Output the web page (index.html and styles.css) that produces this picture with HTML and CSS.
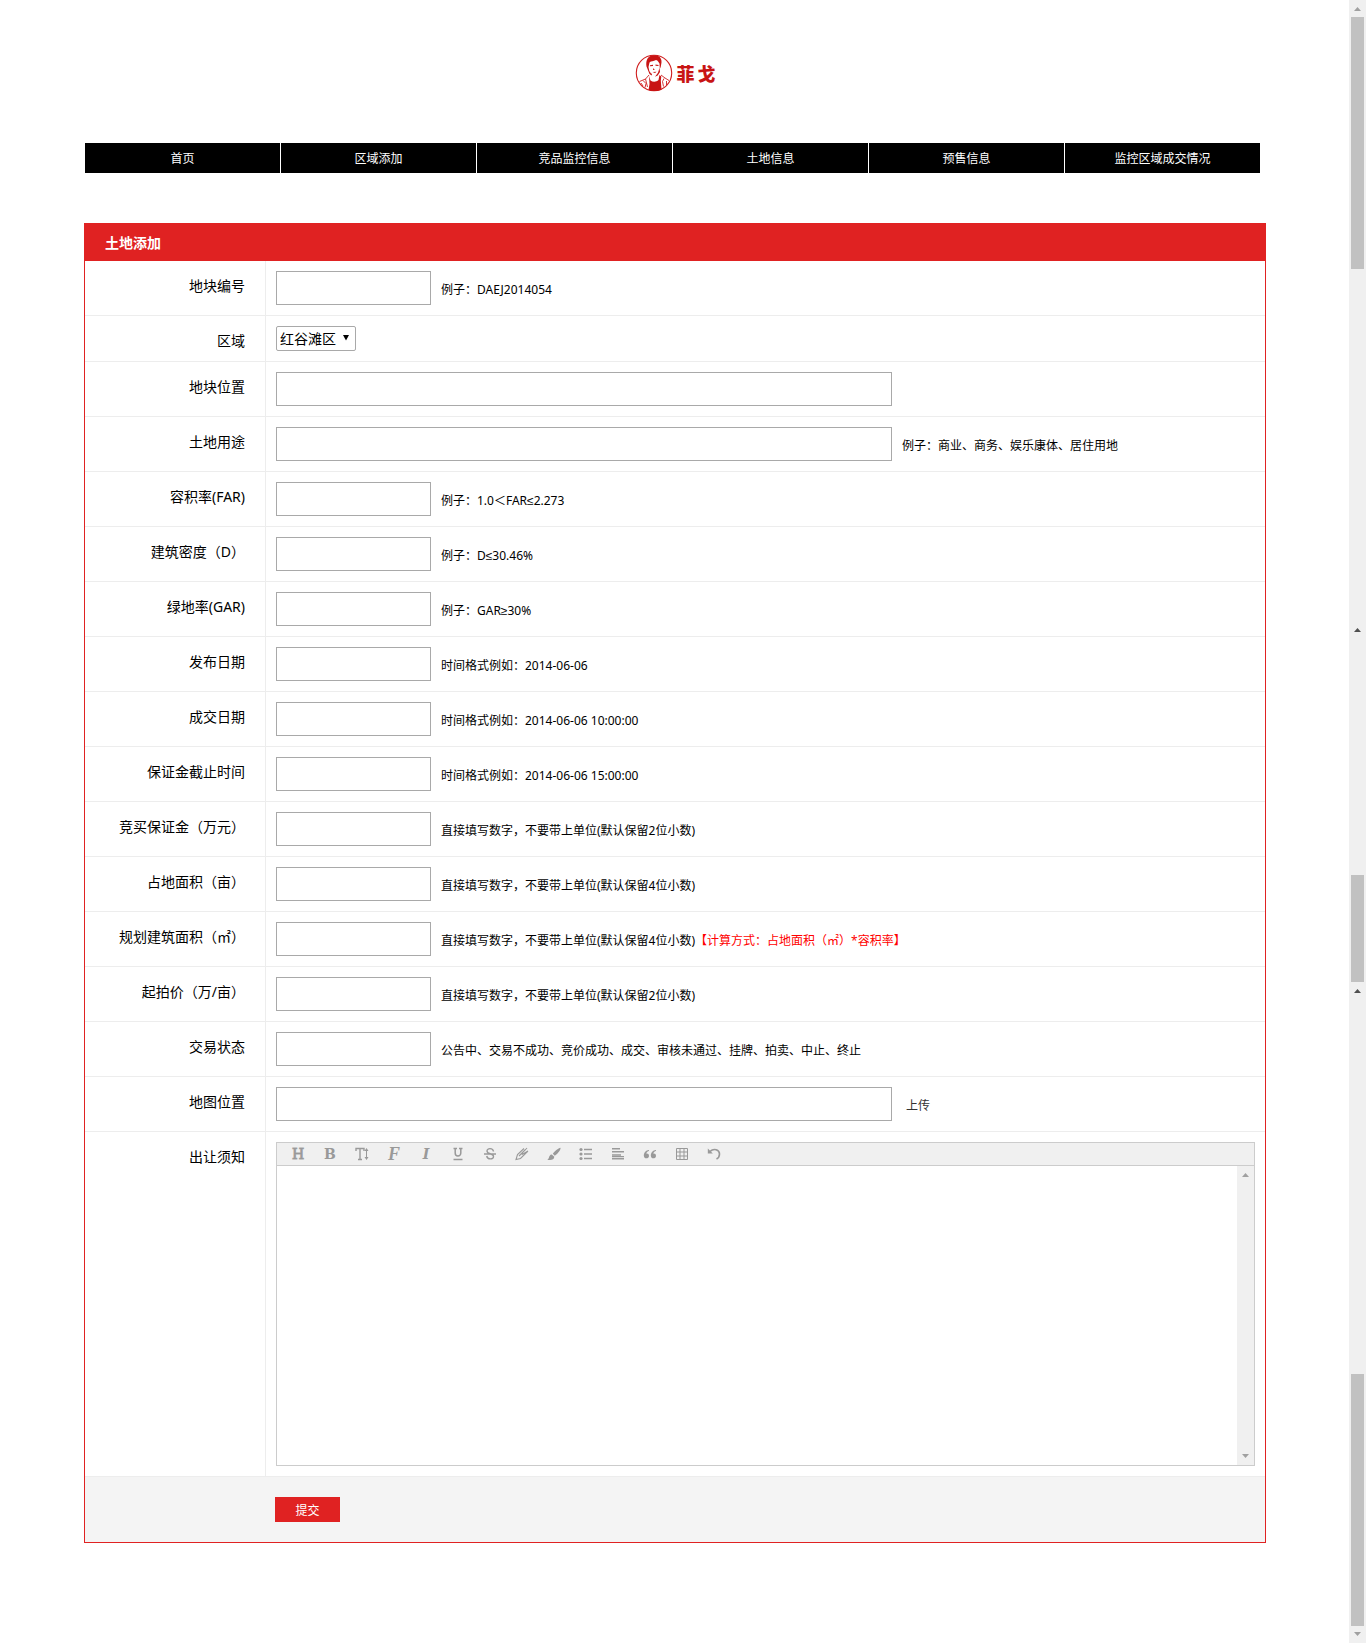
FILE: index.html
```html
<!DOCTYPE html>
<html lang="zh-CN">
<head>
<meta charset="utf-8">
<title>土地添加</title>
<link rel="stylesheet" href="styles.css">
</head>
<body>
<div class="page">
  <header class="brand">
    <svg class="brand-mark" viewBox="0 0 38 38" aria-hidden="true">
      <circle cx="19" cy="19" r="17.7" fill="#fff" stroke="#d02020" stroke-width="1.1"/>
      <path fill="#c81414" d="M11.500 12.500C10.500 6 13 1.500 18.500 1.200c5-.2 8.500 2.300 8 7.300l-.8 4.500-.9 2-.3-5.500c-1-1.500-1.500-3-3.500-3.500-2.500 1.500-5 .8-6.500 2.500l-1 4.500.8 4 1.700 2.500 1 .2-.3 1.800-2.200-1.500z"/>
      <path fill="#c81414" d="M15 11.300l3-.5v1.200l-3 .3zm5.500-.7l3 .3v1l-3-.1zM18.500 14l1.200 2h-1.700zm-1 4l4-.3-1.500 1.300zM24.500 14l.5 4-2.300 3.500-2.700 1.200 3-4z"/>
      <path fill="#c81414" d="M14 22l1.500 4.500c2.500 1.800 6 1.500 8-.5l1-5 1.800 1.500-.5 4 .7 9.200c-4 1.800-9.500 1.800-13 .2l1-6z"/>
      <path fill="none" stroke="#d02020" stroke-width=".9" d="M14 21l-3.500 4-6 2.500M26 21l4 3 4 2.500M8 26.500l3 3-1 4M10.500 25l2 8M29 24.500l-1.500 3 1 5M6 29l2 3M31.500 27v4"/>
    </svg>
    <span class="brand-name"><span>菲</span><span>戈</span></span>
  </header>

  <nav class="menu">
    <a href="#">首页</a>
    <a href="#">区域添加</a>
    <a href="#">竞品监控信息</a>
    <a href="#">土地信息</a>
    <a href="#">预售信息</a>
    <a href="#">监控区域成交情况</a>
  </nav>

  <form class="panel">
    <h1 class="panel-title">土地添加</h1>
    <div class="row"><label class="name" for="code">地块编号</label><div class="field"><input class="box" id="code" type="text"><span class="hint">例子：DAEJ2014054</span></div></div>
    <div class="row"><label class="name" for="area">区域</label><div class="field"><span class="pick"><select id="area"><option>红谷滩区</option></select><svg class="pick-arrow" viewBox="0 0 7 7" aria-hidden="true"><path d="M0 0h7L3.500 6.500z" fill="#000"/></svg></span></div></div>
    <div class="row"><label class="name" for="place">地块位置</label><div class="field"><input class="box wide" id="place" type="text"></div></div>
    <div class="row"><label class="name" for="usage">土地用途</label><div class="field"><input class="box wide" id="usage" type="text"><span class="hint">例子：商业、商务、娱乐康体、居住用地</span></div></div>
    <div class="row"><label class="name" for="far">容积率(FAR)</label><div class="field"><input class="box" id="far" type="text"><span class="hint">例子：1.0＜FAR≤2.273</span></div></div>
    <div class="row"><label class="name" for="density">建筑密度（D）</label><div class="field"><input class="box" id="density" type="text"><span class="hint">例子：D≤30.46%</span></div></div>
    <div class="row"><label class="name" for="gar">绿地率(GAR)</label><div class="field"><input class="box" id="gar" type="text"><span class="hint">例子：GAR≥30%</span></div></div>
    <div class="row"><label class="name" for="issued">发布日期</label><div class="field"><input class="box" id="issued" type="text"><span class="hint">时间格式例如：2014-06-06</span></div></div>
    <div class="row"><label class="name" for="dealt">成交日期</label><div class="field"><input class="box" id="dealt" type="text"><span class="hint">时间格式例如：2014-06-06 10:00:00</span></div></div>
    <div class="row"><label class="name" for="deadline">保证金截止时间</label><div class="field"><input class="box" id="deadline" type="text"><span class="hint">时间格式例如：2014-06-06 15:00:00</span></div></div>
    <div class="row"><label class="name" for="deposit">竞买保证金（万元）</label><div class="field"><input class="box" id="deposit" type="text"><span class="hint">直接填写数字，不要带上单位(默认保留2位小数)</span></div></div>
    <div class="row"><label class="name" for="land">占地面积（亩）</label><div class="field"><input class="box" id="land" type="text"><span class="hint">直接填写数字，不要带上单位(默认保留4位小数)</span></div></div>
    <div class="row"><label class="name" for="floor">规划建筑面积（㎡）</label><div class="field"><input class="box" id="floor" type="text"><span class="hint">直接填写数字，不要带上单位(默认保留4位小数)<span class="alert">【计算方式：占地面积（㎡）*容积率】</span></span></div></div>
    <div class="row"><label class="name" for="price">起拍价（万/亩）</label><div class="field"><input class="box" id="price" type="text"><span class="hint">直接填写数字，不要带上单位(默认保留2位小数)</span></div></div>
    <div class="row"><label class="name" for="state">交易状态</label><div class="field"><input class="box" id="state" type="text"><span class="hint">公告中、交易不成功、竞价成功、成交、审核未通过、挂牌、拍卖、中止、终止</span></div></div>
    <div class="row"><label class="name" for="map">地图位置</label><div class="field"><input class="box wide" id="map" type="text"><button class="upload" type="button">上传</button></div></div>
    <div class="row">
      <label class="name" for="notice">出让须知</label>
      <div class="field">
        <div class="editor">
          <div class="tools">
            <button type="button" class="slab" aria-label="标题">H</button>
            <button type="button" class="bold" aria-label="粗体">B</button>
            <button type="button" aria-label="字号"><svg viewBox="0 0 14 14"><path d="M1 4V1.500h8V4M5 1.500v11M3 12.500h4" fill="none" stroke="currentColor" stroke-width="1.400"/><path d="M11.500 3v8" stroke="currentColor" stroke-width="1"/><path d="M9.500 4l2-3 2 3zM9.500 10l2 3 2-3z"/></svg></button>
            <button type="button" class="script" aria-label="字体">F</button>
            <button type="button" class="italic" aria-label="斜体">I</button>
            <button type="button" aria-label="下划线"><svg viewBox="0 0 14 14"><path d="M2.500 12.500h9M2.500 1.500H6M8 1.500h3.500M4.200 1.500V6c0 4 5.600 4 5.600 0V1.500" fill="none" stroke="currentColor" stroke-width="1.500"/></svg></button>
            <button type="button" aria-label="删除线"><svg viewBox="0 0 14 14"><path d="M10.500 4.500C10 .8 4 .8 4 4c0 3.500 6.500 2 6.500 5.500 0 3.300-6 3.300-6.800-.5M1 7h12" fill="none" stroke="currentColor" stroke-width="1.400"/></svg></button>
            <button type="button" aria-label="文字颜色"><svg viewBox="0 0 14 14"><path d="M9 1.500L2.500 7.500 1 12.500 5.500 11.500 13 4M10.500 2.500L4 9M12 1L5.500 8M13 4L7 7.500" fill="none" stroke="currentColor" stroke-width="1.100"/></svg></button>
            <button type="button" aria-label="背景颜色"><svg viewBox="0 0 14 14"><path d="M13.500.8c-2 0-6.500 4.200-7.700 6l2 2C10 7.500 14 3 13.500.8zM4.800 7.500c-2 0-2.500 2-3 3.500-.3 1-.8 1.200-1.500 1.500 3 1.200 7 .3 7-2.800z"/></svg></button>
            <button type="button" aria-label="列表"><svg viewBox="0 0 14 14"><circle cx="2" cy="2.500" r="1.600"/><circle cx="2" cy="7" r="1.600"/><circle cx="2" cy="11.500" r="1.600"/><path d="M5 1.800h8v1.400H5zM5 6.300h8v1.400H5zM5 10.800h8v1.400H5z"/></svg></button>
            <button type="button" aria-label="对齐方式"><svg viewBox="0 0 14 14"><path d="M1 1h8v1.500H1zM1 4.100h12v1.500H1zM1 7.200h9v1.500H1zM1 9h12v1H1zM1 10.800h12v1.700H1z"/></svg></button>
            <button type="button" aria-label="引用"><svg viewBox="0 0 14 14"><path d="M6 3C3 3.300.8 5.500.8 8.500c0 4 5.200 3.500 5.200.4 0-1.800-1.500-2.600-2.800-2.200C3.500 5.200 4.500 4.300 6 4zM13 3c-3 .3-5.200 2.500-5.200 5.500 0 4 5.200 3.500 5.200.4 0-1.800-1.500-2.600-2.800-2.200.3-1.500 1.300-2.400 2.800-2.700z"/></svg></button>
            <button type="button" aria-label="表格"><svg viewBox="0 0 14 14"><path d="M1.500 1.500h11v11h-11zM1.500 5h11M1.500 9h11M5 1.500v11M9 1.500v11" fill="none" stroke="currentColor" stroke-width="1"/></svg></button>
            <button type="button" aria-label="撤销"><svg viewBox="0 0 14 14"><path d="M3 4.500C7 .5 12.500 3 12.500 7c0 2.500-1 4-3 5" fill="none" stroke="currentColor" stroke-width="1.600"/><path d="M.8 1.500v5h5z"/></svg></button>
          </div>
          <div class="writing">
            <textarea id="notice"></textarea>
            <div class="track" aria-hidden="true">
              <svg class="arrow" viewBox="0 0 17 17"><path d="M5 11h7L8.500 7z"/></svg>
              <svg class="arrow" viewBox="0 0 17 17"><path d="M5 6h7L8.500 10z"/></svg>
            </div>
          </div>
        </div>
      </div>
    </div>
    <div class="actions"><button class="submit" type="submit">提交</button></div>
  </form>
</div>

<div class="rail" aria-hidden="true">
  <svg class="arrow" viewBox="0 0 17 17"><path d="M5 11h7L8.500 7z"/></svg>
  <i class="thumb"></i>
  <i class="gap-a"></i>
  <svg class="arrow dark" viewBox="0 0 17 17"><path d="M5 10h7L8.500 6z"/></svg>
  <i class="gap-b"></i>
  <i class="thumb short"></i>
  <svg class="arrow dark" viewBox="0 0 17 17"><path d="M5 11h7L8.500 7z"/></svg>
  <i class="gap-c"></i>
  <i class="thumb"></i>
  <svg class="arrow" viewBox="0 0 17 17"><path d="M5 6h7L8.500 10z"/></svg>
</div>
</body>
</html>
```

FILE: styles.css
```css
* { box-sizing: border-box; }

body {
  margin: 0;
  display: flex;
  background: #fff;
  color: #000;
  font: 12px/20px "Noto Sans", "Liberation Sans", "Noto Sans CJK SC", sans-serif;
  text-spacing-trim: space-all;
}

button, input, select, textarea { font: inherit; color: inherit; margin: 0; }

.page { flex: 1; min-width: 0; padding: 0 83px 100px 84px; }

/* Logo */
.brand {
  display: flex;
  justify-content: center;
  align-items: center;
  gap: 4px;
  padding: 54px 0 51px;
}
.brand-mark { width: 38px; height: 38px; }
.brand-name {
  display: flex;
  gap: 3px;
  color: #c81414;
  font: 900 18px/20px "Noto Sans CJK SC", sans-serif;
}

/* Main menu */
.menu {
  display: grid;
  grid-template-columns: repeat(6, 1fr);
  margin: 0 5px 50px 1px;
}
.menu a {
  padding-top: 2px;
  border-right: 1px solid #fff;
  background: #000;
  color: #fff;
  line-height: 28px;
  text-align: center;
  text-decoration: none;
}

/* Form panel */
.panel { border: 1px solid #e02222; border-top: 0; }
.panel-title {
  margin: 0;
  padding: 2px 20px 0;
  background: #e02222;
  color: #fff;
  font-size: 14px;
  line-height: 36px;
}
.row {
  display: grid;
  grid-template-columns: 181px 1fr;
  border-bottom: 1px solid #ededed;
}
.name {
  padding: 10px 20px 0 0;
  border-right: 1px solid #ededed;
  font-size: 14px;
  line-height: 30px;
  text-align: right;
}
.field { display: flex; align-items: center; gap: 10px; padding: 10px; min-width: 0; }
.box {
  width: 155px;
  height: 34px;
  padding: 0 5px;
  border: 1px solid #a9a9a9;
  background: #fff;
}
.wide { width: 616px; }
.hint { padding-top: 3px; }
.alert { color: #f00; }
.upload { padding: 3px 4px 0; border: 0; background: none; color: #333; }

.pick { position: relative; display: flex; }
.pick select {
  appearance: none;
  width: 80px;
  height: 25px;
  padding: 0 0 0 3px;
  border: 1px solid #a9a9a9;
  border-radius: 2px;
  background: #fff;
  font-size: 14px;
}
.pick-arrow { position: absolute; top: 9px; right: 7px; width: 6px; height: 6px; pointer-events: none; }

/* Rich text editor */
.editor { flex: 1; border: 1px solid #ccc; }
.tools {
  display: flex;
  padding: 0 5px;
  border-bottom: 1px solid #ccc;
  background: #f0f0f0;
}
.tools button {
  display: flex;
  justify-content: center;
  align-items: center;
  width: 32px;
  height: 22px;
  padding: 0;
  border: 0;
  background: none;
  color: #999;
  font-size: 14px;
  line-height: 22px;
}
.tools svg { width: 14px; height: 14px; fill: currentColor; }
.tools .slab { font-family: "DejaVu Serif", serif; -webkit-text-stroke: 1px #aaa; paint-order: stroke; }
.tools .bold { font-family: "DejaVu Serif", serif; font-weight: 700; }
.tools .script { font-family: "Liberation Serif", serif; font-size: 18px; font-style: italic; font-weight: 700; }
.tools .italic { font-family: "DejaVu Serif", serif; font-style: italic; font-weight: 700; }
.writing { display: flex; height: 299px; }
.writing textarea { flex: 1; padding: 5px; border: 0; outline: 0; resize: none; overflow: auto; }
.track {
  display: flex;
  flex-direction: column;
  justify-content: space-between;
  width: 17px;
  background: #f0f0f0;
}

.actions { padding: 20px 190px; background: #f4f4f4; }
.submit {
  display: block;
  width: 65px;
  height: 25px;
  padding: 3px 0 0;
  border: 0;
  background: #e02222;
  color: #fff;
}

/* Scroll rail at the window edge */
.rail {
  display: flex;
  flex-direction: column;
  align-items: center;
  width: 17px;
  background: #f0f0f0;
}
.arrow { width: 17px; height: 17px; fill: #a0a0a0; }
.dark { fill: #505050; }
.thumb { width: 13px; height: 252px; background: #c1c1c1; }
.short { height: 107px; }
.gap-a { flex: 353; }
.gap-b { flex: 236; }
.gap-c { flex: 375; }
```
